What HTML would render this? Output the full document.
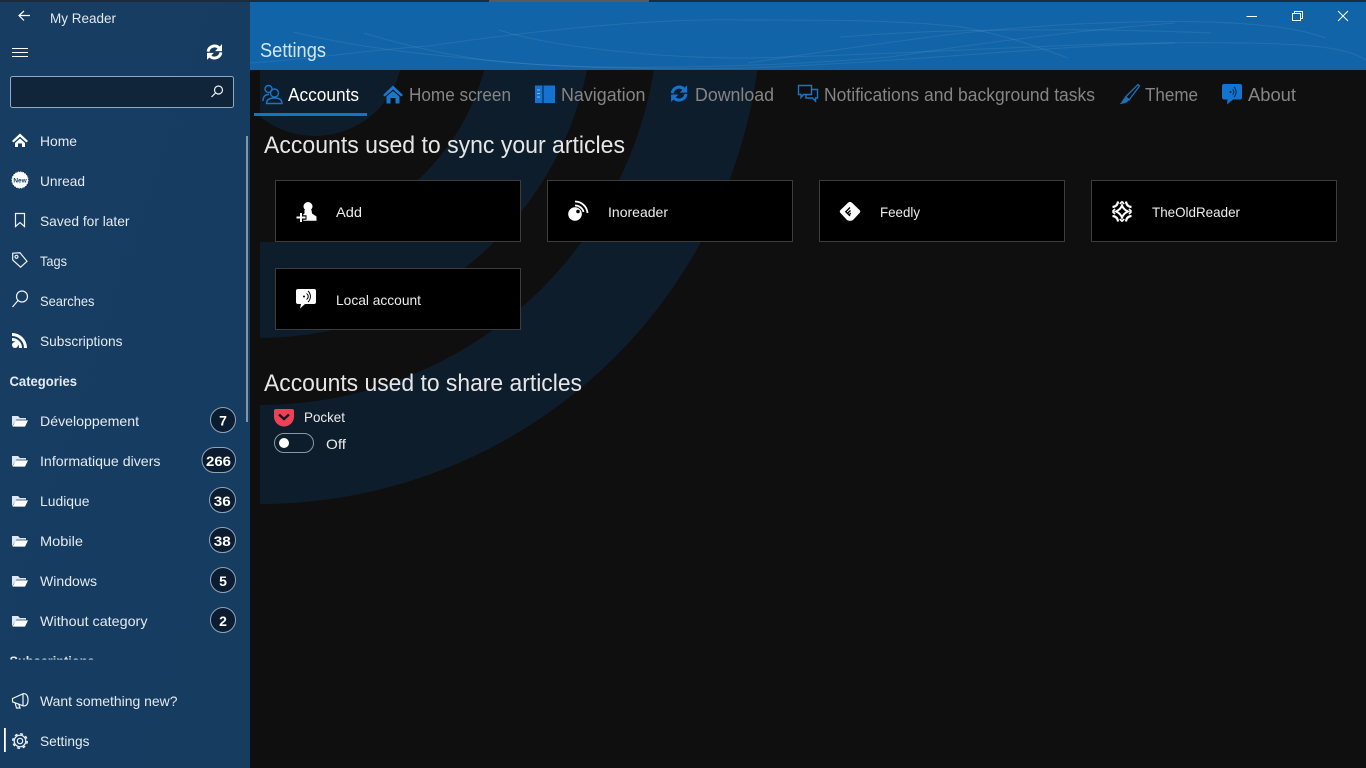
<!DOCTYPE html>
<html lang="en"><head><meta charset="utf-8"><title>My Reader - Settings</title>
<style>
html,body{margin:0;padding:0;width:1366px;height:768px;overflow:hidden;background:#0f0f0f}
svg{display:block;font-family:"Liberation Sans",sans-serif}
.s{font-size:14px;fill:#e3eaf1}
.t{font-size:18px;fill:#858585}
.h{font-size:24px;fill:#e6e6e6}
.c{font-size:14px;fill:#ececec}
.b{font-size:14px;font-weight:bold;fill:#fff;text-anchor:middle}
.ln{fill:none;stroke:#fff;stroke-opacity:.08;stroke-width:1}
.wo{fill:none;stroke:#eef3f7;stroke-width:1.2}
.bo{fill:none;stroke:#1c74c4;stroke-width:1.4}
</style></head><body>
<svg width="1366" height="768" viewBox="0 0 1366 768" xmlns="http://www.w3.org/2000/svg">
<defs>
<linearGradient id="sb" x1="0" y1="0" x2="1" y2="1"><stop offset="0" stop-color="#173d63"/><stop offset="1" stop-color="#163c60"/></linearGradient>
<clipPath id="wm"><rect x="260" y="70" width="1106" height="698"/></clipPath>
<clipPath id="sub"><rect x="0" y="640" width="245" height="19.5"/></clipPath>
<g id="folder"><path d="M0 0h6l2 2h6v1.6H4.2L0 10.5z" fill="#dfe8f0"/><path d="M3.6 4.4H16L13 10.6H0.6z" fill="#fff"/></g>
<g id="sync" fill="none" stroke-width="3.800"><path d="M3.400 11.500A8.800 8.800 0 0 1 18 6.200" stroke="currentColor"/><path d="M22 1.500V10.800H12.700Z" fill="currentColor"/><path d="M20.600 12.500A8.800 8.800 0 0 1 6 17.800" stroke="currentColor"/><path d="M2 22.500V13.200H11.300Z" fill="currentColor"/></g>
</defs>

<rect width="1366" height="768" fill="#0f0f0f"/>

<!-- watermark -->
<g clip-path="url(#wm)" fill="#0e1d2c">
<circle cx="315" cy="48" r="88"/>
<path fill-rule="evenodd" d="M260 504A502 502 0 0 0 762 2H659A399 399 0 0 1 260 405Z"/>
<path fill-rule="evenodd" d="M260 338A333.500 333.500 0 0 0 593.500 4.500H492A232 232 0 0 1 260 242Z"/>
</g>

<!-- sidebar -->
<rect x="0" y="0" width="250" height="768" fill="url(#sb)"/>
<rect x="246" y="136" width="2" height="286" fill="#8296aa"/>

<!-- header -->
<rect x="250" y="2" width="1116" height="68" fill="#1264a8"/>
<g>
<path class="ln" d="M250 63C320 58 370 50 428 46C540 30 650 18 748 20C830 20 900 20 962 27C1010 36 1040 48 1068 58"/>
<path class="ln" d="M293 32C360 48 420 54 485 60C550 67 610 68 677 67C760 66 830 62 890 57C990 42 1080 30 1175 23"/>
<path class="ln" d="M499 30C530 40 570 46 606 50C660 56 700 58 748 58C850 56 950 50 1033 47C1110 43 1180 42 1246 43C1300 44 1345 46 1366 60"/>
<path class="ln" d="M748 63C820 52 890 42 962 33C1050 24 1130 20 1211 22C1260 24 1300 28 1325 38"/>
<path class="ln" d="M364 33C400 44 440 54 485 60C560 68 660 70 748 68C850 64 950 56 1033 50C1090 46 1130 44 1175 43"/>
<path class="ln" d="M840 37C900 32 970 30 1033 30C1100 29 1160 31 1211 33"/>
</g>
<rect x="0" y="0" width="1366" height="2" fill="#1d2b3a"/>
<rect x="489" y="0" width="160" height="2" fill="#5a5a5a"/>

<text x="260" y="57" font-size="20" fill="#d3e5f4" textLength="66" lengthAdjust="spacingAndGlyphs">Settings</text>

<!-- window controls -->
<path d="M1246.500 16.500H1257" stroke="#fff" fill="none"/>
<path d="M1292.500 13.500H1300.500V20.500H1292.500ZM1294.500 13.500V11.500H1302.500V18.500H1300.500" stroke="#fff" fill="none"/>
<path d="M1338 11L1348 21M1348 11L1338 21" stroke="#fff" fill="none"/>

<!-- top of sidebar -->
<path d="M30 15.500H19.500M24 11L19 15.500L24 20.500" fill="none" stroke="#fff" stroke-width="1.200"/>
<text x="50" y="23" class="s" textLength="66" lengthAdjust="spacingAndGlyphs">My Reader</text>
<path d="M12 48.500H28M12 52.500H28M12 56.500H28" stroke="#fff" stroke-width="1"/>
<use href="#sync" transform="translate(205.500,43) scale(.75)" style="color:#fff"/>
<rect x="10.500" y="76.500" width="223" height="31" rx="2" fill="#10243a" stroke="#8ea9c4"/>
<circle cx="218.500" cy="90" r="4" class="wo"/><path d="M215.500 93L211.500 97" class="wo"/>

<!-- nav icons -->
<path d="M12 141L20 133.500L28 141L26.500 142.500L20 136.800L13.500 142.500Z" fill="#fff"/>
<path d="M15 143L20 138.500L25 143V147H22V143.500H18V147H15Z" fill="#fff"/>
<circle cx="20" cy="180" r="8" fill="#fff" stroke="#fff" stroke-width="1" stroke-dasharray="1.500 1"/>
<text x="20" y="182.300" font-size="6.500" font-weight="bold" fill="#173f66" text-anchor="middle">New</text>
<path d="M15.500 213.500H24.500V226.500L20 222.500L15.500 226.500Z" class="wo"/>
<path d="M12.700 253.200L20 252.800L27 261.300L20.600 267.200L12.700 260Z" class="wo"/><circle cx="16.500" cy="256.800" r="1.500" class="wo"/>
<circle cx="22" cy="296.500" r="5.500" class="wo"/><path d="M18 300.500L12.500 307" class="wo"/>
<circle cx="15" cy="345" r="3" fill="#fff"/><path d="M12 339.500A8.500 8.500 0 0 1 20.500 348M12 334.500A13.500 13.500 0 0 1 25.500 348" fill="none" stroke="#fff" stroke-width="3"/>

<text x="40" y="146" class="s" textLength="37" lengthAdjust="spacingAndGlyphs">Home</text>
<text x="40" y="186" class="s" textLength="45" lengthAdjust="spacingAndGlyphs">Unread</text>
<text x="40" y="226" class="s" textLength="89.500" lengthAdjust="spacingAndGlyphs">Saved for later</text>
<text x="40" y="266" class="s" textLength="27" lengthAdjust="spacingAndGlyphs">Tags</text>
<text x="40" y="306" class="s" textLength="54.500" lengthAdjust="spacingAndGlyphs">Searches</text>
<text x="40" y="346" class="s" textLength="82.500" lengthAdjust="spacingAndGlyphs">Subscriptions</text>
<text x="9.500" y="386" class="s" font-weight="bold" textLength="67.500" lengthAdjust="spacingAndGlyphs">Categories</text>

<use href="#folder" x="12" y="416"/><use href="#folder" x="12" y="456"/><use href="#folder" x="12" y="496"/><use href="#folder" x="12" y="536"/><use href="#folder" x="12" y="576"/><use href="#folder" x="12" y="616"/>

<text x="40" y="426" class="s" textLength="99" lengthAdjust="spacingAndGlyphs">Développement</text>
<text x="40" y="466" class="s" textLength="120.500" lengthAdjust="spacingAndGlyphs">Informatique divers</text>
<text x="40" y="506" class="s" textLength="49.500" lengthAdjust="spacingAndGlyphs">Ludique</text>
<text x="40" y="546" class="s" textLength="43" lengthAdjust="spacingAndGlyphs">Mobile</text>
<text x="40" y="586" class="s" textLength="57" lengthAdjust="spacingAndGlyphs">Windows</text>
<text x="40" y="626" class="s" textLength="107.500" lengthAdjust="spacingAndGlyphs">Without category</text>

<g fill="#0c1c30" stroke="#8ea3b8" stroke-width="1">
<circle cx="223" cy="420" r="12.500"/>
<rect x="202" y="447.500" width="33.500" height="25" rx="12.500"/>
<rect x="209.500" y="487.500" width="26" height="25" rx="12.500"/>
<rect x="209.500" y="527.500" width="26" height="25" rx="12.500"/>
<circle cx="223" cy="580" r="12.500"/>
<circle cx="223" cy="620" r="12.500"/>
</g>
<text x="223" y="425.500" class="b">7</text>
<text x="218.500" y="466" class="b" textLength="25" lengthAdjust="spacingAndGlyphs">266</text>
<text x="222.300" y="506" class="b" textLength="17" lengthAdjust="spacingAndGlyphs">36</text>
<text x="222.300" y="546" class="b" textLength="17" lengthAdjust="spacingAndGlyphs">38</text>
<text x="223" y="586" class="b">5</text>
<text x="223" y="626" class="b">2</text>

<g clip-path="url(#sub)"><text x="9.500" y="666" class="s" font-weight="bold" textLength="85" lengthAdjust="spacingAndGlyphs">Subscriptions</text></g>

<!-- megaphone -->
<path d="M12.500 698.500L23 693.800V705.800L12.500 701.800ZM23 693.800C26.500 693 28 696 28 700C28 704 26.500 706.500 23 705.800M15 702.500L16.500 708H20L18.500 703.500" class="wo"/>
<text x="40" y="706" class="s" textLength="137.500" lengthAdjust="spacingAndGlyphs">Want something new?</text>
<rect x="4" y="728" width="1.800" height="24" fill="#fff"/>
<circle cx="20" cy="741" r="2.700" class="wo"/><circle cx="20" cy="741" r="5.800" class="wo"/><circle cx="20" cy="741" r="7.200" fill="none" stroke="#eef3f7" stroke-width="1.500" stroke-dasharray="2.800 2.855"/>
<text x="40" y="746" class="s" textLength="49.500" lengthAdjust="spacingAndGlyphs">Settings</text>

<!-- tabs -->
<circle cx="268.500" cy="89" r="3.500" class="bo"/><path d="M263 101C263 96.500 265 94.500 269 94.500" class="bo"/>
<circle cx="274.500" cy="93" r="4" class="bo"/><path d="M266.500 103.500C266.500 100 269 98 274.500 98C280 98 282 100 282 103.500Z" class="bo"/>
<text x="288" y="101" class="t" style="fill:#fff" textLength="71" lengthAdjust="spacingAndGlyphs">Accounts</text>
<rect x="254" y="113" width="113" height="3" fill="#1273c8"/>

<path d="M383 95L393 85.500L403 95L401 96.500L393 89.500L385 96.500Z" fill="#1a78cc"/><path d="M386.500 96.500L393 91L399.500 96.500V103.500H395.500V98H390.500V103.500H386.500Z" fill="#1a78cc"/>
<text x="409" y="101" class="t" textLength="102" lengthAdjust="spacingAndGlyphs">Home screen</text>

<path d="M535 85.500H542.500V103H535ZM543.500 85.500H555V103H543.500Z" fill="#1273d0"/><path d="M537 90H540M537 93.500H540M537 97H540" stroke="#7db8ee" stroke-width="1"/>
<text x="561" y="101" class="t" textLength="84.500" lengthAdjust="spacingAndGlyphs">Navigation</text>

<use href="#sync" transform="translate(669.500,84) scale(.8)" style="color:#1273d0"/>
<text x="695" y="101" class="t" textLength="79" lengthAdjust="spacingAndGlyphs">Download</text>

<path d="M798.500 85.500H811.500V94.500H803.500L801 97.500V94.500H798.500Z" class="bo" stroke-width="1.200"/><path d="M811.500 89.500H817.500V98H815.500V101L812.500 98H806V94.500" class="bo" stroke-width="1.200"/>
<text x="824" y="101" class="t" textLength="271" lengthAdjust="spacingAndGlyphs">Notifications and background tasks</text>

<path d="M1138 84.500L1139.500 86L1129 100C1128 98.500 1127 97.500 1125.500 97Z" fill="none" stroke="#1c6fb8" stroke-width="1.300"/><path d="M1125 97.500C1127 98 1128 99 1128.500 100.500C1127 103 1123 104 1119.500 104C1122 102.500 1122.500 99 1125 97.500Z" fill="#1c6fb8"/>
<text x="1145" y="101" class="t" textLength="53" lengthAdjust="spacingAndGlyphs">Theme</text>

<path d="M1224 84H1240Q1242 84 1242 86V97Q1242 99.500 1240 99.500H1233L1227 104.500L1227.500 99.500H1224Q1222 99.500 1222 97V86Q1222 84 1224 84Z" fill="#1273d0"/>
<path d="M1232.500 89.500A3 3 0 0 1 1232.500 94.500M1234 87A7 7 0 0 1 1234 97" fill="none" stroke="#0f2a45" stroke-width="1"/><circle cx="1230.500" cy="92" r="1" fill="#0f2a45"/>
<text x="1248" y="101" class="t" textLength="48" lengthAdjust="spacingAndGlyphs">About</text>

<!-- headings -->
<text x="264" y="153" class="h" textLength="361" lengthAdjust="spacingAndGlyphs">Accounts used to sync your articles</text>
<text x="264" y="391" class="h" textLength="318" lengthAdjust="spacingAndGlyphs">Accounts used to share articles</text>

<!-- cards -->
<g fill="#000" stroke="#3c3c3c" stroke-width="1">
<rect x="275.500" y="180.500" width="245" height="61"/>
<rect x="547.500" y="180.500" width="245" height="61"/>
<rect x="819.500" y="180.500" width="245" height="61"/>
<rect x="1091.500" y="180.500" width="245" height="61"/>
<rect x="275.500" y="268.500" width="245" height="61"/>
</g>

<!-- add -->
<circle cx="308" cy="206.500" r="4.500" fill="#fff"/>
<path d="M304.500 210H311.500L312 213.500L316.500 216.500V220.800H300V216.500L304.500 213.500Z" fill="#fff"/>
<path d="M296 217.500H306.500M301 212.500V222" stroke="#000" stroke-width="4.500"/>
<path d="M296.500 217.500H305.500M301 213V222" stroke="#fff" stroke-width="2"/>
<text x="336" y="217" class="c" textLength="26" lengthAdjust="spacingAndGlyphs">Add</text>

<!-- inoreader -->
<circle cx="575" cy="214" r="6.800" fill="#fff"/><circle cx="578" cy="211.500" r="1.800" fill="#000"/>
<path d="M575 205.500A8.500 8.500 0 0 1 583.500 212M575 201.500A12.500 12.500 0 0 1 587.500 213" fill="none" stroke="#fff" stroke-width="1.800"/>
<text x="608" y="217" class="c" textLength="60" lengthAdjust="spacingAndGlyphs">Inoreader</text>

<!-- feedly -->
<path d="M848 202.800Q850 201 852 202.800L859.500 210Q861 211.500 859.500 213L853.500 219.500Q852.500 220.700 851 220.700H849Q847.500 220.700 846.500 219.500L840.500 213Q839 211.500 840.500 210Z" fill="#fff"/>
<path d="M850 207.500L845.800 211.700L850 215.900M850.500 210.500L847.800 213M850.700 213L849.500 214.500" fill="none" stroke="#000" stroke-width="1.400"/>
<text x="880" y="217" class="c" textLength="40" lengthAdjust="spacingAndGlyphs">Feedly</text>

<!-- theoldreader -->
<path d="M1122 205.500Q1123.500 209.500 1128 211.500Q1123.500 213.500 1122 217.500Q1120.500 213.500 1116 211.500Q1120.500 209.500 1122 205.500Z" fill="none" stroke="#fff" stroke-width="2"/>
<path d="M1112.500 207Q1117.500 206.500 1118 201.500M1131.500 207Q1126.500 206.500 1126 201.500M1112.500 216Q1117.500 216.500 1118 221.500M1131.500 216Q1126.500 216.500 1126 221.500" fill="none" stroke="#fff" stroke-width="2.200"/>
<path d="M1112.500 211.500L1115 209M1112.500 211.500L1115 214M1131.500 211.500L1129 209M1131.500 211.500L1129 214M1122 201.500L1119.800 204M1122 201.500L1124.200 204M1122 221.500L1119.800 219M1122 221.500L1124.200 219" fill="none" stroke="#fff" stroke-width="1.600"/>
<text x="1152" y="217" class="c" textLength="88" lengthAdjust="spacingAndGlyphs">TheOldReader</text>

<!-- local -->
<path d="M298 289H314Q316 289 316 291V302Q316 304 314 304H305L300 308.500L301 304H298Q296 304 296 302V291Q296 289 298 289Z" fill="#fff"/>
<path d="M306.500 293.500A3.500 3.500 0 0 1 306.500 299.500M308 291A7.500 7.500 0 0 1 308 302" fill="none" stroke="#000" stroke-width="1"/><circle cx="304" cy="296.500" r="1" fill="#000"/>
<text x="336" y="305" class="c" textLength="85" lengthAdjust="spacingAndGlyphs">Local account</text>

<!-- pocket -->
<path d="M276 409H292Q294 409 294 411V416.500C294 422 289.500 426.500 284 426.500C278.500 426.500 274 422 274 416.500V411Q274 409 276 409Z" fill="#ee4056"/>
<path d="M279 414.500L284 419L289 414.500" fill="none" stroke="#1a1420" stroke-width="2.400"/>
<text x="304" y="422" class="c" textLength="41" lengthAdjust="spacingAndGlyphs">Pocket</text>
<rect x="274.500" y="433.500" width="39" height="19" rx="9.500" fill="none" stroke="#8b98a4"/>
<circle cx="284" cy="443" r="5" fill="#fff"/>
<text x="326" y="449" class="c" textLength="20" lengthAdjust="spacingAndGlyphs">Off</text>
</svg>
</body></html>
